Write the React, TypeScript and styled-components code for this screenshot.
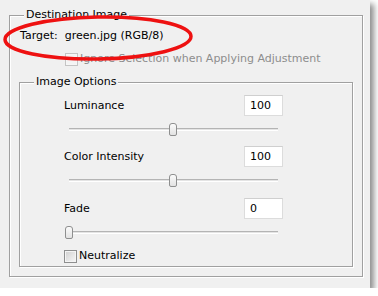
import styled, { createGlobalStyle } from "styled-components";

const GlobalStyle = createGlobalStyle`
  html, body {
    margin: 0;
    background: #ffffff;
  }
  body {
    font-family: "DejaVu Sans", Tahoma, sans-serif;
    font-size: 11px;
    color: #000000;
  }
`;

const Dialog = styled.div`
  position: relative;
  width: 370px;
  height: 288px;
  box-sizing: border-box;
  padding: 8px 0 0 9px;
  background: #f0f0f0;
  box-shadow: 4px 4px 6px rgba(0, 0, 0, 0.45);
`;

const Group = styled.fieldset<{ $width?: number; $height?: number; $top?: number }>`
  margin: ${(p) => p.$top ?? 0}px 0 0 0;
  padding: 0 9px 0 9px;
  min-width: 0;
  box-sizing: border-box;
  width: ${(p) => (p.$width ? `${p.$width}px` : "auto")};
  height: ${(p) => (p.$height ? `${p.$height}px` : "auto")};
  border: 1px solid #a0a0a0;
  box-shadow: inset 1px 1px 0 #ffffff, 1px 1px 0 #ffffff;
`;

const Caption = styled.legend`
  position: relative;
  margin-left: 5px;
  padding: 0 2px;
  line-height: 14px;
  background: #f0f0f0;
`;

const TargetLine = styled.div`
  margin-top: 7px;
  padding-left: 1px;
  line-height: 14px;
  white-space: pre;
`;

const CheckRow = styled.label<{ $indent: number; $top: number; $disabled?: boolean }>`
  display: flex;
  align-items: center;
  gap: 2px;
  height: 14px;
  margin-top: ${(p) => p.$top}px;
  margin-left: ${(p) => p.$indent}px;
  line-height: 14px;
  color: ${(p) => (p.$disabled ? "#8d8d8d" : "#000000")};
`;

const Box = styled.span<{ $disabled?: boolean }>`
  width: 13px;
  height: 13px;
  box-sizing: border-box;
  flex: none;
  border: 1px solid ${(p) => (p.$disabled ? "#c4c4c4" : "#8e8f8f")};
  box-shadow: inset 0 0 0 1px ${(p) => (p.$disabled ? "#f6f6f6" : "#f4f4f4")};
  background: ${(p) =>
    p.$disabled
      ? "#f4f4f4"
      : "linear-gradient(135deg, #cfcfcf 0%, #e6e6e6 55%, #f7f7f7 100%)"};
`;

const Options = styled.div`
  width: 219px;
  margin-left: 35px;
  padding-top: 6px;
`;

const FieldRow = styled.div<{ $top: number }>`
  display: flex;
  align-items: center;
  justify-content: space-between;
  height: 21px;
  margin-top: ${(p) => p.$top}px;
`;

const NumField = styled.input`
  width: 39px;
  height: 21px;
  box-sizing: border-box;
  margin: 0;
  padding: 0 0 0 5px;
  border: 1px solid #dcdcdc;
  border-top-color: #cfcfcf;
  background: #ffffff;
  font-family: "DejaVu Sans", Tahoma, sans-serif;
  font-size: 11px;
  color: #000000;
  outline: none;
`;

const Slider = styled.div`
  position: relative;
  height: 13px;
  margin-top: 7px;
  padding-top: 5px;
  box-sizing: border-box;
`;

const Track = styled.div`
  height: 3px;
  margin: 0 5px;
  box-sizing: border-box;
  border-top: 1px solid #b4b4b4;
  border-bottom: 1px solid #ffffff;
  background: #e4e4e4;
`;

const Thumb = styled.div`
  position: absolute;
  top: 0;
  width: 8px;
  height: 13px;
  box-sizing: border-box;
  border: 1px solid #8e8f8f;
  border-radius: 3px 3px 2px 2px;
  background: linear-gradient(#fbfbfb, #e2e2e2);
`;

const Ring = styled.svg`
  position: absolute;
  left: 0;
  top: 0;
  pointer-events: none;
`;

const TRACK_START = 5;
const TRACK_LENGTH = 208;

const fields = [
  { label: "Luminance", value: "100", pct: 0.5, top: 0 },
  { label: "Color Intensity", value: "100", pct: 0.5, top: 10 },
  { label: "Fade", value: "0", pct: 0, top: 11 },
];

export default function App() {
  return (
    <>
      <GlobalStyle />
      <Dialog>
        <Group $width={354} $height={269}>
          <Caption>Destination Image</Caption>
          <TargetLine>{"Target:  green.jpg (RGB/8)"}</TargetLine>
          <CheckRow $indent={46} $top={9} $disabled>
            <Box $disabled />
            Ignore Selection when Applying Adjustment
          </CheckRow>
          <Group $top={9} $height={192}>
            <Caption>Image Options</Caption>
            <Options>
              {fields.map((f) => (
                <div key={f.label}>
                  <FieldRow $top={f.top}>
                    <span>{f.label}</span>
                    <NumField readOnly value={f.value} />
                  </FieldRow>
                  <Slider>
                    <Track />
                    <Thumb style={{ left: TRACK_START + f.pct * TRACK_LENGTH - 4 }} />
                  </Slider>
                </div>
              ))}
              <CheckRow $indent={0} $top={10}>
                <Box />
                Neutralize
              </CheckRow>
            </Options>
          </Group>
        </Group>
        <Ring width="210" height="70" viewBox="0 0 210 70">
          <ellipse
            cx="98"
            cy="38"
            rx="93"
            ry="21"
            transform="rotate(-1 98 38)"
            fill="none"
            stroke="#ee1111"
            strokeWidth="3.5"
          />
        </Ring>
      </Dialog>
    </>
  );
}
